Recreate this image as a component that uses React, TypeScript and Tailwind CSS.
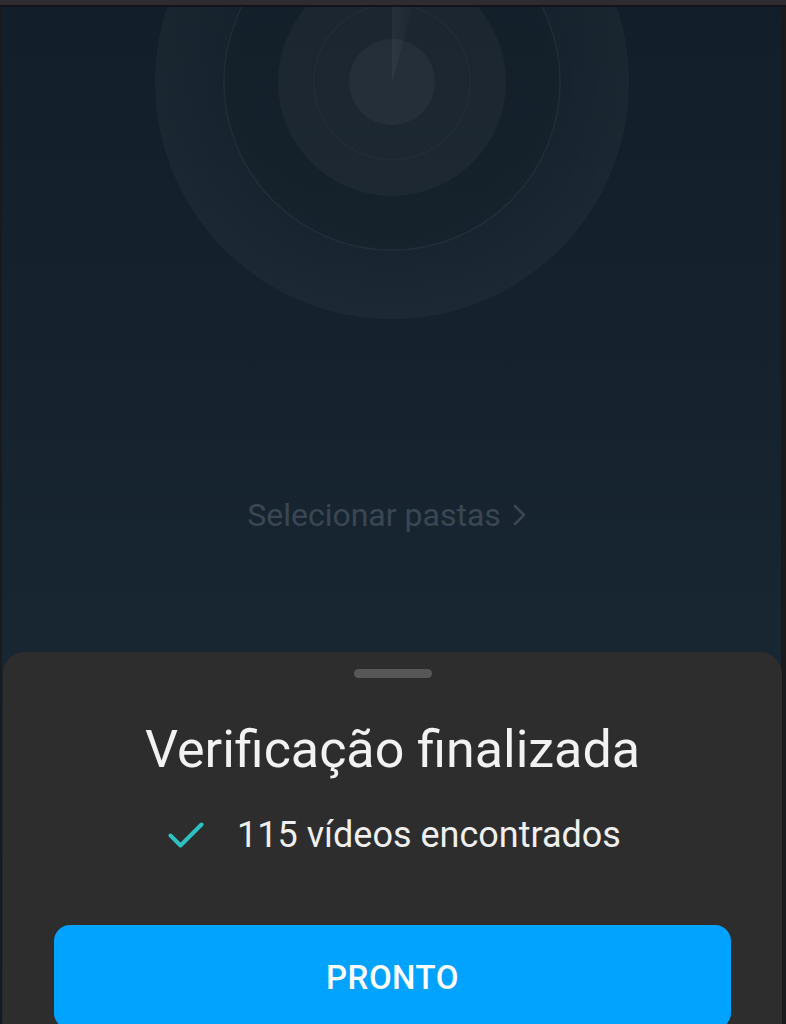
import React from "react";

export default function App() {
  return (
    <div
      className="w-[786px] h-[1024px] overflow-hidden flex flex-col bg-[#1a1a1c]"
      style={{ fontFamily: "Roboto, 'Noto Sans', sans-serif" }}
    >
      <div className="h-[5px] bg-[#2e2c30] shrink-0" />
      <div className="h-[2px] bg-[#141317] shrink-0" />
      <div className="flex-1 flex flex-col pl-[2px] pr-[5px]">
        <div className="flex-1 flex flex-col bg-gradient-to-b from-[#121e29] to-[#1c2b38]">
          <div className="relative flex-1 flex flex-col items-center pt-[490px]">
            <svg
              className="absolute left-0 top-0 pointer-events-none"
              width="779"
              height="340"
              viewBox="0 0 779 340"
            >
              <defs>
                <linearGradient id="sweep" x1="0" y1="0" x2="1" y2="0">
                  <stop offset="0" stopColor="#ffffff" stopOpacity="0.045" />
                  <stop offset="1" stopColor="#ffffff" stopOpacity="0" />
                </linearGradient>
                <radialGradient id="outer" cx="0.5" cy="0.5" r="0.5">
                  <stop offset="0.6" stopColor="#ffffff" stopOpacity="0.012" />
                  <stop offset="1" stopColor="#ffffff" stopOpacity="0.032" />
                </radialGradient>
              </defs>
              <circle cx="390" cy="75" r="237" fill="url(#outer)" />
              <circle cx="390" cy="75" r="168" fill="#0f1a24" fillOpacity="0.25" stroke="#ffffff" strokeOpacity="0.05" strokeWidth="1.5" />
              <circle cx="390" cy="75" r="114" fill="#ffffff" fillOpacity="0.035" />
              <circle cx="390" cy="75" r="78" fill="none" stroke="#ffffff" strokeOpacity="0.025" strokeWidth="1.5" />
              <circle cx="390" cy="75" r="43" fill="#ffffff" fillOpacity="0.04" />
              <path d="M390 75 L390 -10 L414 -10 Z" fill="url(#sweep)" />
            </svg>
            <div className="relative flex items-center gap-[12px] pr-[10px] text-[32px] leading-[36px] text-[#3a4752]">
              <span>Selecionar pastas</span>
              <svg width="13" height="22" viewBox="0 0 13 22" fill="none" className="shrink-0">
                <path d="M2 2 L11 11 L2 20" stroke="#3a4752" strokeWidth="2.6" strokeLinecap="round" strokeLinejoin="round" />
              </svg>
            </div>
          </div>
          <div className="h-[372px] shrink-0 ml-[1px] -mr-[1px] rounded-t-[22px] bg-[#2d2d2d] flex flex-col items-center px-[51px] overflow-hidden">
            <div className="shrink-0 mt-[17px] w-[78px] h-[9px] rounded-full bg-[#575757]" />
            <div className="shrink-0 mt-[42px] text-[52px] leading-[60px] text-[#f2f2f2] whitespace-nowrap">
              Verificação finalizada
            </div>
            <div className="shrink-0 mt-[34px] flex items-center justify-center gap-[33px] pl-[4px]">
              <svg width="36" height="27" viewBox="0 0 36 27" fill="none" className="shrink-0">
                <path d="M2.5 13.5 L12.5 23.5 L33.5 2.5" stroke="#2dc1c1" strokeWidth="4" strokeLinecap="round" strokeLinejoin="round" />
              </svg>
              <span className="text-[36px] leading-[42px] text-[#efefef] whitespace-nowrap">115 vídeos encontrados</span>
            </div>
            <button className="shrink-0 mt-[69px] w-full h-[104px] rounded-[16px] bg-[#02a3ff] text-white text-[33px] font-medium leading-none tracking-[0.5px]">
              PRONTO
            </button>
          </div>
        </div>
      </div>
    </div>
  );
}
